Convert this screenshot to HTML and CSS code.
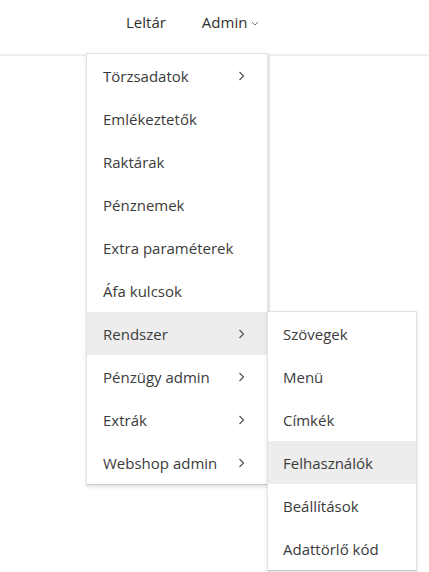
FILE: index.html
```html
<!DOCTYPE html>
<html lang="hu">
<head>
<meta charset="utf-8">
<link rel="stylesheet" href="styles.css">
</head>
<body>
<header class="topbar">
  <nav class="nav">
    <span class="nav-item">Leltár</span>
    <span class="nav-item admin">Admin
      <svg class="caret" width="8" height="5" viewBox="0 0 8 5"><polyline points="1,1 4,4 7,1" fill="none" stroke="#777" stroke-width="1"/></svg>
    </span>
  </nav>
</header>
<main class="page">
  <div class="panel"></div>
</main>

<ul class="menu">
  <li class="item">Törzsadatok<svg class="chev" width="7" height="10" viewBox="0 0 7 10"><polyline points="1.5,1 5.5,5 1.5,9" fill="none" stroke="#555" stroke-width="1.2"/></svg></li>
  <li class="item">Emlékeztetők</li>
  <li class="item">Raktárak</li>
  <li class="item">Pénznemek</li>
  <li class="item">Extra paraméterek</li>
  <li class="item">Áfa kulcsok</li>
  <li class="item active has-sub">Rendszer<svg class="chev" width="7" height="10" viewBox="0 0 7 10"><polyline points="1.5,1 5.5,5 1.5,9" fill="none" stroke="#555" stroke-width="1.2"/></svg>
    <ul class="submenu">
      <li class="item">Szövegek</li>
      <li class="item">Menü</li>
      <li class="item">Címkék</li>
      <li class="item active">Felhasználók</li>
      <li class="item">Beállítások</li>
      <li class="item">Adattörlő kód</li>
    </ul>
  </li>
  <li class="item">Pénzügy admin<svg class="chev" width="7" height="10" viewBox="0 0 7 10"><polyline points="1.5,1 5.5,5 1.5,9" fill="none" stroke="#555" stroke-width="1.2"/></svg></li>
  <li class="item">Extrák<svg class="chev" width="7" height="10" viewBox="0 0 7 10"><polyline points="1.5,1 5.5,5 1.5,9" fill="none" stroke="#555" stroke-width="1.2"/></svg></li>
  <li class="item">Webshop admin<svg class="chev" width="7" height="10" viewBox="0 0 7 10"><polyline points="1.5,1 5.5,5 1.5,9" fill="none" stroke="#555" stroke-width="1.2"/></svg></li>
</ul>
</body>
</html>
```
FILE: styles.css
```css
* { box-sizing: border-box; }
html, body { margin: 0; padding: 0; background: #fff; }
body {
  font-family: "Open Sans", "Noto Sans", sans-serif;
  color: #3b3b3b;
  font-size: 15px;
  width: 429px;
  height: 572px;
  overflow: hidden;
  position: relative;
}
.topbar {
  height: 54px;
  background: #fff;
  display: flex;
  align-items: flex-start;
  padding-left: 126px;
  padding-top: 11px;
}
.nav { display: flex; gap: 36px; }
.nav-item { font-size: 15px; color: #2f2f2f; line-height: 22px; display: flex; align-items: center; }
.caret { margin-left: 4px; margin-top: 3px; }
.page {
  border-top: 2px solid #eeeeee;
  height: 518px;
  display: flex;
  padding-left: 268px;
  padding-right: 5px;
}
.panel {
  flex: 1;
  border-left: 2px solid #f0f0f0;
}
.menu {
  position: absolute;
  left: 86px;
  top: 53px;
  width: 182px;
  margin: 0;
  padding: 0;
  list-style: none;
  background: #fff;
  border: 1px solid #e2e2e2;
  border-bottom-color: #c9c9c9;
  box-shadow: 0 2px 4px rgba(0,0,0,0.12);
}
.item {
  position: relative;
  height: 43px;
  display: flex;
  align-items: center;
  justify-content: space-between;
  padding: 0 22px 0 16px;
  line-height: 20px;
  white-space: nowrap;
}
.item.active { background: #ededed; }
.chev { flex: none; }
.submenu {
  position: absolute;
  left: 180px;
  top: -1px;
  width: 150px;
  margin: 0;
  padding: 0;
  list-style: none;
  background: #fff;
  border: 1px solid #e2e2e2;
  border-bottom-color: #c9c9c9;
  box-shadow: 0 2px 4px rgba(0,0,0,0.12);
  z-index: 2;
}
.submenu .item { padding-left: 15px; }
```
